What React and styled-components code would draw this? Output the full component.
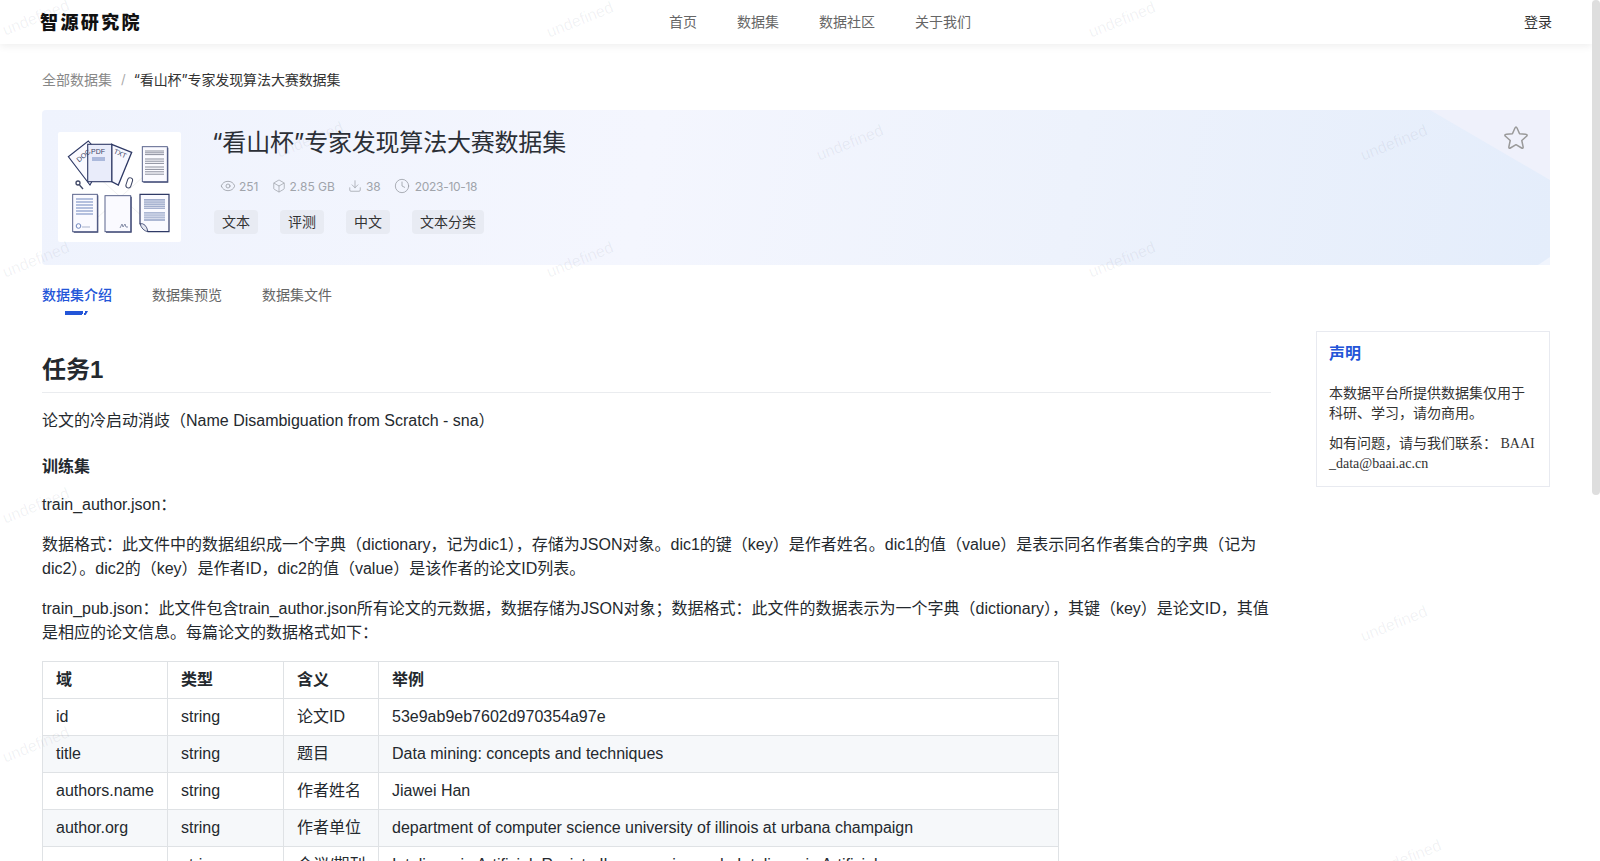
import React from "react";
import styled, { createGlobalStyle } from "styled-components";
import { Eye, Box, Download, Clock } from "lucide-react";

const UI = `Inter, "Noto Sans CJK SC", sans-serif`;
const MD = `"Liberation Sans", "Noto Sans CJK SC", sans-serif`;

const Global = createGlobalStyle`
  html, body { margin: 0; padding: 0; height: 100%; overflow: hidden; background: #fff; }
  * { box-sizing: border-box; }
  #root { height: 100%; }
`;

const Page = styled.div`
  position: relative; width: 1600px; height: 861px; overflow: hidden; padding-right: 8px;
  font-family: ${UI}; color: #24292e;
`;
const ScrollThumb = styled.div`
  position: absolute; right: 0; top: 0; width: 8px; height: 495px;
  background: #dedede; border-radius: 4px;
`;
const Watermark = styled.span`
  position: absolute; left: ${p => p.$x}px; top: ${p => p.$y}px;
  transform: translate(-50%, -50%) rotate(-22deg);
  font: 16px "Liberation Sans", sans-serif; color: rgba(60, 70, 100, 0.07);
  pointer-events: none; z-index: 5;
`;
const Header = styled.header`
  position: relative; height: 44px; display: flex; align-items: center; padding: 0 40px 2px;
  background: #fff; box-shadow: 0 2px 8px rgba(0, 0, 0, 0.07);
`;
const Logo = styled.div`
  width: 102px; font: 900 18px/20px "Noto Sans CJK SC", sans-serif; letter-spacing: 2.4px; color: #111; white-space: nowrap;
`;
const Nav = styled.nav`
  display: flex; gap: 40px; margin-left: 527px;
`;
const NavItem = styled.a`
  font-size: 14px; color: #666;
`;
const Login = styled.a`
  margin-left: auto; font-size: 14px; color: #333;
`;
const Main = styled.main`
  padding: 0 42px;
`;
const Breadcrumb = styled.div`
  display: flex; align-items: center; height: 20px; margin-top: 25px; font-size: 14px; color: #888;
`;
const Sep = styled.span`
  margin: 0 8px 0 9px; color: #aaa; font-size: 13px;
`;
const Current = styled.span`
  color: #333; letter-spacing: -0.1px;
`;
const Banner = styled.section`
  position: relative; overflow: hidden; display: flex; height: 155px; margin-top: 21px;
  padding: 22px 16px; gap: 32px; border-radius: 4px 0 0 4px;
  background: linear-gradient(100deg, #eff3fd 0%, #f4f6fe 40%, #edf2fc 68%, #e4edfb 100%);
  &::before {
    content: ""; position: absolute; right: 0; top: 0; width: 120px; height: 70px;
    background: #eff1fb; clip-path: polygon(0 0, 100% 0, 100% 100%);
  }
  &::after {
    content: ""; position: absolute; right: 0; bottom: 0; width: 12px; height: 8px;
    background: #f1f5fd; clip-path: polygon(100% 0, 100% 100%, 0 100%);
  }
`;
const Thumb = styled.div`
  flex: none; width: 123px; height: 110px; background: #fff; border-radius: 2px;
  svg { display: block; }
`;
const Info = styled.div`
  position: relative; flex: 1; min-width: 0;
`;
const Title = styled.h1`
  margin: -5px 0 0 -1px; font: 400 24px/32px ${UI}; color: #2b2f36; letter-spacing: -0.2px;
`;
const Meta = styled.div`
  display: flex; align-items: center; height: 20px; margin-top: 17px; padding-left: 7px; gap: 13px;
`;
const MetaItem = styled.span`
  display: flex; align-items: center; gap: ${p => p.$gap}px; font-size: 12px; color: #a0a4ab;
  letter-spacing: ${p => p.$ls || 0}px;
  svg { flex: none; color: #989ca3; }
`;
const Tags = styled.div`
  display: flex; gap: 22px; margin: 14px 0 0 1px;
`;
const Tag = styled.span`
  height: 24px; padding: 0 8px; border-radius: 4px; background: #e8ebf3;
  font-size: 14px; line-height: 24px; color: #333;
`;
const Fav = styled.div`
  position: relative; z-index: 1; flex: none; margin: -7px 5px 0 0; color: #9a9a9a;
  svg { display: block; }
`;
const Tabs = styled.div`
  display: flex; gap: 40px; height: 50px; padding-top: 20px;
`;
const TabItem = styled.a`
  position: relative; height: 20px; font-size: 14px; line-height: 20px; color: ${p => (p.$active ? "#2355d8" : "#666")};
  font-weight: ${p => (p.$active ? 500 : 400)};
  ${p => p.$active && `
    &::after {
      content: ""; position: absolute; left: 23px; top: 26px; width: 23px; height: 4px;
      background: linear-gradient(105deg, #2355d8 0 76%, transparent 76% 83%, #2355d8 83%);
      clip-path: polygon(0 0, 100% 0, 90% 100%, 0 100%);
    }
  `}
`;
const Body = styled.div`
  display: flex; gap: 45px; align-items: flex-start;
`;
const Article = styled.article`
  width: 1229px; padding-top: 40px; font: 16px/24px ${MD}; color: #24292e;
`;
const H1 = styled.h2`
  margin: 0 0 16px; padding-bottom: 7px; border-bottom: 1px solid #eaecef;
  font: 700 24px/30px ${MD};
`;
const H3 = styled.h3`
  margin: 24px 0 16px; font: 700 16px/20px ${MD};
`;
const P = styled.p`
  margin: 0 0 16px;
`;
const Table = styled.table`
  border-collapse: collapse; width: 1017px; table-layout: fixed;
`;
const Tr = styled.tr`
  background: ${p => (p.$alt ? "#f6f8fa" : "#fff")};
`;
const Th = styled.th`
  width: ${p => p.$w}px; padding: 6px 13px; border: 1px solid #dfe2e5; text-align: left; font-weight: 700;
`;
const Td = styled.td`
  padding: 6px 13px; border: 1px solid #dfe2e5; white-space: nowrap; overflow: hidden;
`;
const Aside = styled.aside`
  flex: none; width: 234px; height: 156px; margin-top: 16px; padding: 11px 12px 0; border: 1px solid #e8eaf0;
  font: 14px/20px "Liberation Serif", "Noto Sans CJK SC", serif; color: #333; word-break: break-all;
`;
const AsideTitle = styled.h4`
  margin: 0 0 19px; font: 700 16px/22px ${MD}; color: #2355d8;
`;
const AsideP = styled.p`
  margin: 0 0 10px;
`;

const starPath = (() => {
  const pt = (r, deg) => [12 + r * Math.cos((deg * Math.PI) / 180), 12.6 + r * Math.sin((deg * Math.PI) / 180)];
  const lerp = (a, b, t) => [a[0] + (b[0] - a[0]) * t, a[1] + (b[1] - a[1]) * t];
  const f = p => p.map(n => n.toFixed(2)).join(" ");
  let d = "";
  for (let i = 0; i < 5; i++) {
    const a = -90 + i * 72;
    const tip = pt(12, a);
    const prev = pt(5.6, a - 36);
    const next = pt(5.6, a + 36);
    d += `${i ? "L" : "M"}${f(lerp(tip, prev, 0.32))}Q${f(tip)} ${f(lerp(tip, next, 0.32))}L${f(next)}`;
  }
  return `${d}Z`;
})();

const StarIcon = () => (
  <svg width="26" height="26" viewBox="0 0 24 24" fill="none" stroke="currentColor" strokeWidth="1.4" strokeLinejoin="round">
    <path d={starPath} />
  </svg>
);

const Doc = ({ x, y, w, h }) => (
  <g>
    <rect x={x + 1} y={y + 1} width={w} height={h} fill="#2f3a66" />
    <rect x={x} y={y} width={w} height={h} fill="#fafaff" stroke="#4a5480" strokeWidth="0.9" />
  </g>
);
const Lines = ({ x, y, w, n, gap, color = "#6f86bd", sw = 1 }) => (
  <g stroke={color} strokeWidth={sw}>
    {Array.from({ length: n }, (_, i) => (
      <line key={i} x1={x} x2={x + w} y1={y + i * gap} y2={y + i * gap} />
    ))}
  </g>
);
const DocsArt = () => (
  <svg width="123" height="110" viewBox="0 0 123 110">
    <g stroke="#ddd" strokeWidth="0.6" opacity="0.7">
      <line x1="40" y1="45" x2="85" y2="85" />
      <line x1="85" y1="45" x2="40" y2="85" />
    </g>
    <polygon points="10.3,24.7 30.3,9 46,27 32,53" fill="#fafaff" stroke="#2f3a66" strokeWidth="1.1" />
    <polygon points="53.7,12.3 73.7,20.3 60.3,53 53.7,49.7" fill="#f7f8ff" stroke="#2f3a66" strokeWidth="1.3" />
    <rect x="29.7" y="12.3" width="24" height="37.4" fill="#e9ecfa" stroke="#2f3a66" strokeWidth="1.1" />
    <text x="33" y="22" fontSize="7" fontFamily="Liberation Sans" fill="#3c4566">PDF</text>
    <text x="18" y="28" fontSize="7" fontFamily="Liberation Sans" fill="#3c4566" transform="rotate(-40 23 25)">DOC</text>
    <text x="56" y="23" fontSize="7" fontFamily="Liberation Sans" fill="#3c4566" transform="rotate(24 60 20)">TXT</text>
    <Lines x={34} y={26} w={13} n={2} gap={2} />
    <g fill="none" stroke="#3f4766" strokeWidth="1.3">
      <circle cx="20" cy="51" r="2" />
      <line x1="21.5" y1="53" x2="25" y2="57" />
      <rect x="69" y="45.5" width="5" height="10.5" rx="2.5" transform="rotate(18 71 50)" strokeWidth="1" />
    </g>
    <Doc x={84.3} y={14.7} w={25} h={35} />
    <Lines x={87} y={19} w={19} n={3} gap={1.8} color="#5c6172" sw="0.7" />
    <Lines x={87} y={27} w={19} n={3} gap={2.2} color="#5c6172" sw="0.7" />
    <Lines x={87} y={35} w={19} n={4} gap={2.4} color="#5c6172" sw="0.7" />
    <Doc x={14.7} y={62.3} w={24.6} h={37.4} />
    <Lines x={18} y={67} w={17} n={6} gap={3} />
    <circle cx="20.5" cy="94" r="2.3" fill="none" stroke="#6f86bd" />
    <line x1="24" y1="95" x2="32" y2="95" stroke="#a9b3cc" />
    <Doc x={47} y={63.7} w={25.7} h={36} />
    <path d="M62 96l2-4 1 3 2-3 1 3 2 0" fill="none" stroke="#7c85a0" strokeWidth="0.9" />
    <path d="M82 62.3h29v37.4H90l-8-8z" fill="#fafaff" stroke="#2f3a66" strokeWidth="1.2" />
    <path d="M82 91.7q6-1 8 8q-6-1-8-8z" fill="#e5e7f1" stroke="#2f3a66" strokeWidth="0.8" />
    <rect x="86" y="67" width="21" height="10" fill="#a2aecd" />
    <rect x="86" y="80" width="21" height="9" fill="#adb8d4" />
    <Lines x={86} y={69} w={21} n={4} gap={2.2} color="#fafaff" sw="0.6" />
    <Lines x={86} y={82} w={21} n={3} gap={2.2} color="#fafaff" sw="0.6" />
  </svg>
);

const rows = [
  ["id", "string", "论文ID", "53e9ab9eb7602d970354a97e"],
  ["title", "string", "题目", "Data mining: concepts and techniques"],
  ["authors.name", "string", "作者姓名", "Jiawei Han"],
  ["author.org", "string", "作者单位", "department of computer science university of illinois at urbana champaign"],
  ["venue", "string", "会议/期刊", "Inteligencia Artificial, Revista Iberoamericana de Inteligencia Artificial"],
];
const marks = [
  [36, 18], [580, 20], [1122, 20], [310, 140], [850, 143], [1394, 143],
  [36, 260], [580, 260], [1122, 260], [36, 506], [1394, 624], [36, 745], [1408, 858],
];

export default function App() {
  return (
    <Page>
      <Global />
      <Header>
        <Logo>智源研究院</Logo>
        <Nav>
          <NavItem>首页</NavItem>
          <NavItem>数据集</NavItem>
          <NavItem>数据社区</NavItem>
          <NavItem>关于我们</NavItem>
        </Nav>
        <Login>登录</Login>
      </Header>
      <Main>
        <Breadcrumb>
          全部数据集<Sep>/</Sep>
          <Current>“看山杯”专家发现算法大赛数据集</Current>
        </Breadcrumb>
        <Banner>
          <Thumb><DocsArt /></Thumb>
          <Info>
            <Title>“看山杯”专家发现算法大赛数据集</Title>
            <Meta>
              <MetaItem $gap={3}><Eye size={16} strokeWidth={1.2} />251</MetaItem>
              <MetaItem $gap={4}><Box size={14} strokeWidth={1.2} />2.85 GB</MetaItem>
              <MetaItem $gap={4}><Download size={14} strokeWidth={1.2} />38</MetaItem>
              <MetaItem $gap={5} $ls={-0.3}><Clock size={16} strokeWidth={1.2} />2023-10-18</MetaItem>
            </Meta>
            <Tags>
              <Tag>文本</Tag>
              <Tag>评测</Tag>
              <Tag>中文</Tag>
              <Tag>文本分类</Tag>
            </Tags>
          </Info>
          <Fav><StarIcon /></Fav>
        </Banner>
        <Tabs>
          <TabItem $active>数据集介绍</TabItem>
          <TabItem>数据集预览</TabItem>
          <TabItem>数据集文件</TabItem>
        </Tabs>
        <Body>
          <Article>
            <H1>任务1</H1>
            <P>论文的冷启动消歧（Name Disambiguation from Scratch - sna）</P>
            <H3>训练集</H3>
            <P>train_author.json：</P>
            <P>数据格式：此文件中的数据组织成一个字典（dictionary，记为dic1），存储为JSON对象。dic1的键（key）是作者姓名。dic1的值（value）是表示同名作者集合的字典（记为dic2）。dic2的（key）是作者ID，dic2的值（value）是该作者的论文ID列表。</P>
            <P>train_pub.json：此文件包含train_author.json所有论文的元数据，数据存储为JSON对象；数据格式：此文件的数据表示为一个字典（dictionary），其键（key）是论文ID，其值是相应的论文信息。每篇论文的数据格式如下：</P>
            <Table>
              <thead>
                <Tr>
                  <Th $w={125}>域</Th>
                  <Th $w={116}>类型</Th>
                  <Th $w={95}>含义</Th>
                  <Th>举例</Th>
                </Tr>
              </thead>
              <tbody>
                {rows.map((r, i) => (
                  <Tr key={r[0]} $alt={i % 2 === 1}>
                    {r.map(c => <Td key={c}>{c}</Td>)}
                  </Tr>
                ))}
              </tbody>
            </Table>
          </Article>
          <Aside>
            <AsideTitle>声明</AsideTitle>
            <AsideP>本数据平台所提供数据集仅用于科研、学习，请勿商用。</AsideP>
            <AsideP>如有问题，请与我们联系： BAAI_data@baai.ac.cn</AsideP>
          </Aside>
        </Body>
      </Main>
      {marks.map(([x, y]) => <Watermark key={`${x}-${y}`} $x={x} $y={y}>undefined</Watermark>)}
      <ScrollThumb />
    </Page>
  );
}
